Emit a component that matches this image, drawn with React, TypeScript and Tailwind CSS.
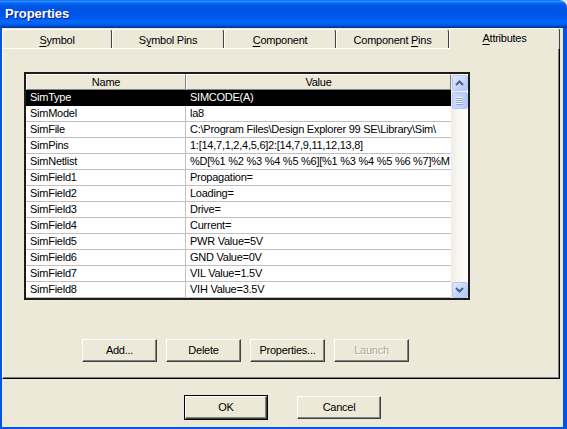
import React from 'react'

const rows: [string, string][] = [
  ['SimType', 'SIMCODE(A)'],
  ['SimModel', 'la8'],
  ['SimFile', 'C:\\Program Files\\Design Explorer 99 SE\\Library\\Sim\\'],
  ['SimPins', '1:[14,7,1,2,4,5,6]2:[14,7,9,11,12,13,8]'],
  ['SimNetlist', '%D[%1 %2 %3 %4 %5 %6][%1 %3 %4 %5 %6 %7]%M'],
  ['SimField1', 'Propagation='],
  ['SimField2', 'Loading='],
  ['SimField3', 'Drive='],
  ['SimField4', 'Current='],
  ['SimField5', 'PWR Value=5V'],
  ['SimField6', 'GND Value=0V'],
  ['SimField7', 'VIL Value=1.5V'],
  ['SimField8', 'VIH Value=3.5V'],
]

const tabs = [
  { label: 'Symbol', ul: 0, w: 'w-[110px]' },
  { label: 'Symbol Pins', ul: 1, w: 'w-[112px]' },
  { label: 'Component', ul: 0, w: 'w-[112px]' },
  { label: 'Component Pins', ul: 10, w: 'w-[113px]' },
  { label: 'Attributes', ul: 0, w: 'w-[111px]' },
]

function Accel({ text, ul }: { text: string; ul: number }) {
  return (
    <span>
      {text.slice(0, ul)}
      <span className="underline underline-offset-[2px]">{text[ul]}</span>
      {text.slice(ul + 1)}
    </span>
  )
}

function Tab({ label, ul, w, active }: { label: string; ul: number; w: string; active?: boolean }) {
  if (active) {
    return (
      <div
        className={`${w} relative z-10 -mb-px flex h-[21px] items-center justify-center rounded-t-[3px] border-l border-t border-r border-l-white border-t-white border-r-[#404040] bg-[#ECE9D8] pb-[1px]`}
      >
        <Accel text={label} ul={ul} />
      </div>
    )
  }
  return (
    <div
      className={`${w} flex h-[19px] items-center justify-center rounded-t-[3px] border-l border-t border-r border-l-white border-t-white border-r-[#404040] bg-[#ECE9D8] pt-[2px]`}
    >
      <Accel text={label} ul={ul} />
    </div>
  )
}

function Btn({ children, disabled, w = 'w-[75px]' }: { children: React.ReactNode; disabled?: boolean; w?: string }) {
  return (
    <div
      className={`${w} flex h-[23px] items-center justify-center border border-t-white border-l-white border-r-[#404040] border-b-[#404040] bg-[#ECE9D8] shadow-[inset_-1px_-1px_0_#808080] ${
        disabled ? 'text-[#aca899] [text-shadow:1px_1px_0_#fff]' : 'text-black'
      }`}
    >
      {children}
    </div>
  )
}

function ArrowBtn({ up }: { up?: boolean }) {
  return (
    <div className="flex h-[16px] w-[16px] items-center justify-center rounded-[2px] border border-[#b6c9f2] bg-[linear-gradient(135deg,#e2ebfe_0%,#c3d4fb_60%,#b4c8f6_100%)]">
      <svg width="9" height="6" viewBox="0 0 9 6">
        <polyline
          points={up ? '1,5 4.5,1.5 8,5' : '1,1 4.5,4.5 8,1'}
          fill="none"
          stroke="#4d6185"
          strokeWidth="2"
        />
      </svg>
    </div>
  )
}

function Scrollbar() {
  return (
    <div className="flex w-[17px] flex-col items-center bg-[linear-gradient(90deg,#eeede5_0%,#f7f6f1_40%,#fefefb_100%)] pt-px">
      <ArrowBtn up />
      <div className="mt-px flex h-[17px] w-[16px] flex-col items-center justify-center gap-[1px] rounded-[2px] border border-[#b3c6f1] bg-[linear-gradient(90deg,#cad9fd_0%,#bfd1fb_60%,#b6caf7_100%)]">
        {[0, 1, 2, 3].map((i) => (
          <div key={i} className="h-px w-[7px] bg-[#eef3ff] shadow-[0_1px_0_#8fa7de]" />
        ))}
      </div>
      <div className="flex-1" />
      <ArrowBtn />
    </div>
  )
}

function AttrList() {
  return (
    <div className="flex w-[446px] border-2 border-[#1c1c1c] bg-white">
      <div className="w-[425px]">
        <div className="flex h-[16px]">
          <div className="flex w-[160px] items-center justify-center border-t border-l border-r border-b border-t-white border-l-white border-r-[#808080] border-b-[#808080] bg-[#ECE9D8]">
            Name
          </div>
          <div className="flex w-[265px] items-center justify-center border-t border-l border-r border-b border-t-white border-l-white border-r-[#808080] border-b-[#808080] bg-[#ECE9D8]">
            Value
          </div>
        </div>
        {rows.map(([n, v], i) => {
          const sel = i === 0
          return (
            <div
              key={n}
              className={`flex h-[16px] border-b ${sel ? 'border-b-black bg-black text-white' : 'border-b-[#c0c0c0] text-black'}`}
            >
              <div className={`w-[160px] border-r pl-[4px] leading-[15px] ${sel ? 'border-r-black' : 'border-r-[#c0c0c0]'}`}>{n}</div>
              <div className="w-[265px] overflow-hidden whitespace-nowrap pl-[4px] leading-[15px]">{v}</div>
            </div>
          )
        })}
      </div>
      <Scrollbar />
    </div>
  )
}

export default function App() {
  return (
    <div className="flex h-[429px] w-[567px] flex-col overflow-hidden bg-[#ECE9D8] font-['Liberation_Sans',Arial,sans-serif] text-[11px] tracking-[-0.25px] text-black">
      <div className="flex h-[28px] items-center rounded-tr-[8px] bg-[linear-gradient(180deg,#0058ee_0%,#3593ff_4%,#288eff_6%,#127dff_8%,#036ffc_10%,#0262ee_14%,#0057e5_20%,#0054e3_24%,#0055eb_56%,#005bf5_66%,#026afe_76%,#0062ef_86%,#0052d6_92%,#0040ab_96%,#003092_100%)] pb-[1px] pl-[5px]">
        <span className="text-[13px] font-bold tracking-normal text-white [text-shadow:1px_1px_0_#0a1883]">Properties</span>
      </div>
      <div className="flex flex-1 flex-col border-l-2 border-r-4 border-b-2 border-l-[#0054e3] border-r-[#0054e3] border-b-[#0055ea]">
        <div className="relative z-10 flex h-[20px] items-end">
          {tabs.map((t, i) => (
            <Tab key={t.label} {...t} active={i === 4} />
          ))}
        </div>
        <div className="flex h-[331px] w-[558px] flex-col border-t border-l border-r border-b border-t-white border-l-white border-r-black border-b-black shadow-[inset_-1px_-1px_0_#808080]">
          <div className="pl-[21px] pt-[23px]">
            <AttrList />
          </div>
          <div className="mt-[39px] flex gap-[9px] pl-[79px]">
            <Btn>Add...</Btn>
            <Btn>Delete</Btn>
            <Btn>Properties...</Btn>
            <Btn disabled>Launch</Btn>
          </div>
        </div>
        <div className="mt-[16px] flex justify-center gap-[29px]">
          <div className="border border-black">
            <Btn w="w-[82px]">OK</Btn>
          </div>
          <div className="py-px">
            <Btn w="w-[84px]">Cancel</Btn>
          </div>
        </div>
      </div>
    </div>
  )
}
